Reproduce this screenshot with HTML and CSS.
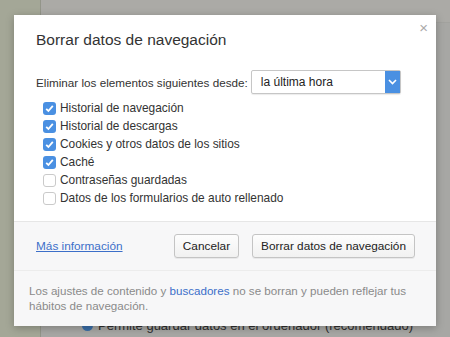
FILE: index.html
```html
<!DOCTYPE html>
<html lang="es">
<head>
    <meta charset="UTF-8">
    <title>Borrar datos de navegación</title>
    <link rel="stylesheet" href="styles.css">
</head>
<body>
    <div class="backdrop">
        <div class="side-strip"></div>
        <div class="page-area">
            <div class="page-top"></div>
            <div class="page-body">
                <div class="behind-row">
                    <span class="behind-radio"></span>
                    <span>Permite guardar datos en el ordenador (recomendado)</span>
                </div>
            </div>
        </div>
    </div>

    <div class="dialog">
        <div class="dialog-main">
            <div class="close-btn">×</div>
            <h1 class="dialog-title">Borrar datos de navegación</h1>

            <div class="range-row">
                <span>Eliminar los elementos siguientes desde:</span>
                <div class="select-box">
                    <span class="select-text">la última hora</span>
                    <span class="select-arrow">
                        <svg width="9" height="6" viewBox="0 0 9 6"><path d="M1 1 L4.5 4.5 L8 1" fill="none" stroke="#fff" stroke-width="1.6"/></svg>
                    </span>
                </div>
            </div>

            <ul class="check-list">
                <li><span class="check on"><svg width="11" height="11" viewBox="0 0 11 11"><path d="M2.2 5.8 L4.4 8 L8.8 2.8" fill="none" stroke="#fff" stroke-width="1.8"/></svg></span>Historial de navegación</li>
                <li><span class="check on"><svg width="11" height="11" viewBox="0 0 11 11"><path d="M2.2 5.8 L4.4 8 L8.8 2.8" fill="none" stroke="#fff" stroke-width="1.8"/></svg></span>Historial de descargas</li>
                <li><span class="check on"><svg width="11" height="11" viewBox="0 0 11 11"><path d="M2.2 5.8 L4.4 8 L8.8 2.8" fill="none" stroke="#fff" stroke-width="1.8"/></svg></span>Cookies y otros datos de los sitios</li>
                <li><span class="check on"><svg width="11" height="11" viewBox="0 0 11 11"><path d="M2.2 5.8 L4.4 8 L8.8 2.8" fill="none" stroke="#fff" stroke-width="1.8"/></svg></span>Caché</li>
                <li><span class="check"></span>Contraseñas guardadas</li>
                <li><span class="check"></span>Datos de los formularios de auto rellenado</li>
            </ul>
        </div>

        <div class="dialog-actions">
            <a class="more-link" href="#">Más información</a>
            <div class="buttons">
                <button class="btn">Cancelar</button>
                <button class="btn">Borrar datos de navegación</button>
            </div>
        </div>

        <div class="dialog-note">
            <div class="note-line"><span>Los ajustes de contenido y</span> <span class="note-link">buscadores</span> <span>no se borran y pueden reflejar tus</span></div>
            <div class="note-line">hábitos de navegación.</div>
        </div>
    </div>
</body>
</html>
```

FILE: styles.css
```css
html, body {
    margin: 0;
    padding: 0;
}
body {
    width: 450px;
    height: 337px;
    overflow: hidden;
    position: relative;
    font-family: "Liberation Sans", Arial, sans-serif;
    color: #333;
}
.backdrop {
    display: flex;
    height: 337px;
}
.side-strip {
    width: 40px;
    background: #a4a797;
    border-right: 1px solid #939589;
}
.page-area {
    flex: 1;
    display: flex;
    flex-direction: column;
    background: #a7a7a4;
}
.page-top {
    height: 22px;
    background: #abaaa6;
    border-bottom: 1px solid #a2a29e;
}
.page-body {
    flex: 1;
    display: flex;
    flex-direction: column;
    justify-content: flex-end;
}
.behind-row {
    display: flex;
    align-items: center;
    gap: 5px;
    padding-left: 41px;
    margin-bottom: 4px;
    font-size: 13px;
    color: #2e2e2e;
}
.behind-radio {
    width: 11px;
    height: 11px;
    border-radius: 50%;
    background: #3a6ea8;
}
.dialog {
    position: absolute;
    left: 14px;
    top: 15px;
    width: 422px;
    height: 311px;
    background: #fff;
    box-shadow: 0 2px 8px rgba(0, 0, 0, 0.25);
    display: flex;
    flex-direction: column;
}
.dialog-main {
    position: relative;
    padding: 14px 22px 0;
    height: 192px;
    border-bottom: 1px solid #e6e6e6;
}
.close-btn {
    position: absolute;
    right: 8px;
    top: 4px;
    font-size: 15px;
    color: #aaa;
}
.dialog-title {
    margin: 0;
    font-size: 15.5px;
    font-weight: normal;
    line-height: 22px;
    color: #333;
}
.range-row {
    display: flex;
    align-items: center;
    gap: 3px;
    margin-top: 19px;
    font-size: 11.7px;
}
.select-box {
    display: flex;
    align-items: center;
    width: 148px;
    height: 22px;
    border: 1px solid #c6c6c6;
    border-radius: 2px;
    box-shadow: 0 1px 1px rgba(0, 0, 0, 0.08);
}
.select-text {
    flex: 1;
    padding-left: 9px;
    font-size: 12px;
    color: #222;
}
.select-arrow {
    width: 15px;
    height: 22px;
    display: flex;
    align-items: center;
    justify-content: center;
    background: #4a90e2;
}
.check-list {
    list-style: none;
    margin: 5px 0 0;
    padding: 0 0 0 7px;
    font-size: 11.9px;
}
.check-list li {
    display: flex;
    align-items: center;
    height: 18px;
}
.check {
    width: 13px;
    height: 13px;
    box-sizing: border-box;
    border: 1px solid #cacaca;
    border-radius: 3px;
    background: #fff;
    margin-right: 4px;
    display: flex;
    align-items: center;
    justify-content: center;
}
.check.on {
    border: none;
    background: #4a90e2;
}
.dialog-actions {
    display: flex;
    align-items: center;
    justify-content: space-between;
    height: 48px;
    padding: 0 21px 0 22px;
    background: #f7f7f8;
    border-bottom: 1px solid #ececec;
}
.more-link {
    font-size: 11.8px;
    color: #3c6fc9;
}
.buttons {
    display: flex;
    gap: 13px;
}
.btn {
    height: 24px;
    padding: 0 8px;
    font-family: "Liberation Sans", Arial, sans-serif;
    font-size: 11.8px;
    color: #222;
    background: linear-gradient(#fdfdfd, #f1f1f1);
    border: 1px solid #c4c4c4;
    border-radius: 3px;
    box-shadow: 0 1px 0 rgba(0, 0, 0, 0.06);
}
.dialog-note {
    flex: 1;
    padding: 12px 15px 0;
    background: #f7f7f8;
    font-size: 11.6px;
    line-height: 15px;
    color: #8a8a8a;
}
.note-line {
    white-space: nowrap;
}
.note-link {
    color: #3c6fc9;
}
```
